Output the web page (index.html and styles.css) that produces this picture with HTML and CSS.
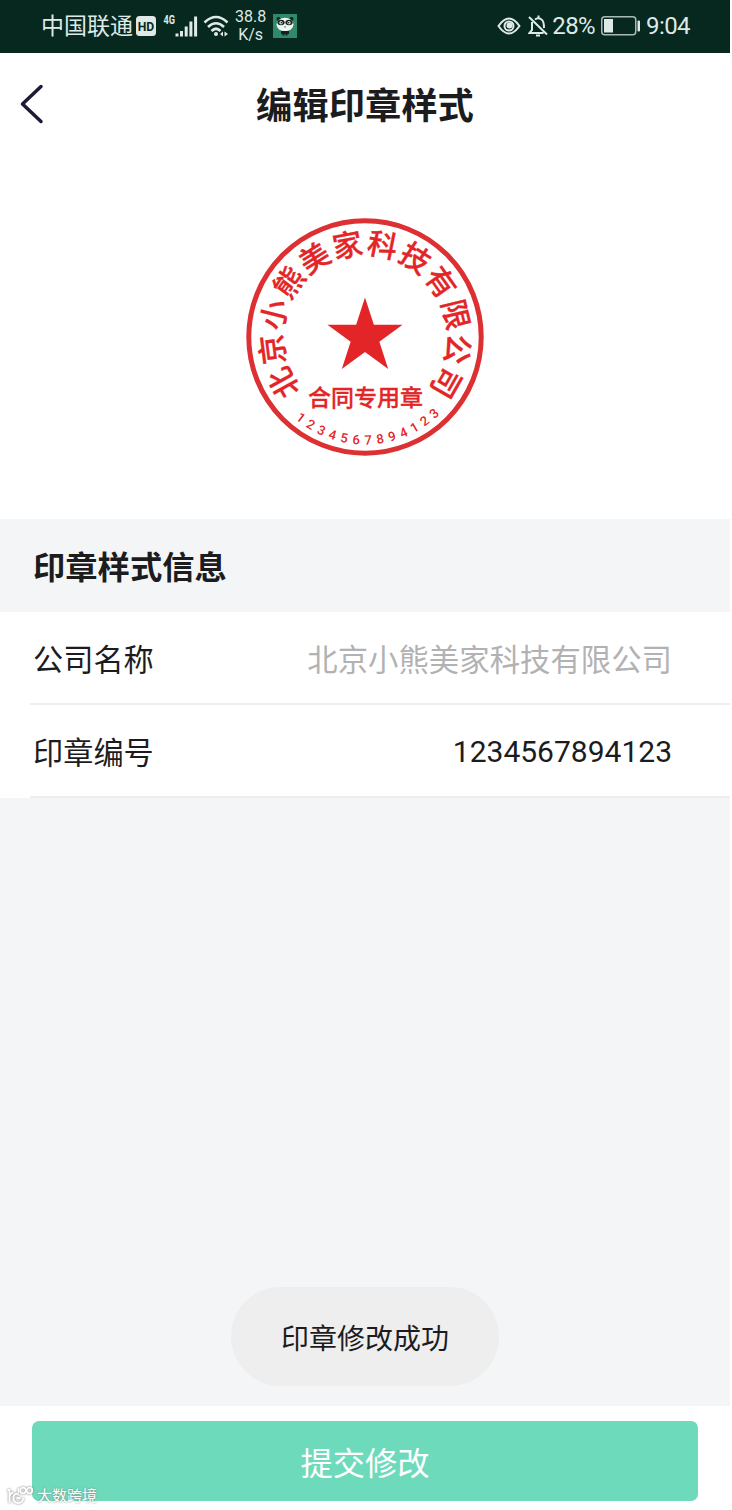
FILE: index.html
```
<!DOCTYPE html>
<html lang="zh-CN">
  <head>
    <meta charset="UTF-8" />
    <meta name="viewport" content="width=device-width, initial-scale=1.0" />
    <title>编辑印章样式</title>
    <link rel="stylesheet" href="styles.css">
  </head>
  <body>
    <div class="page">
      <header class="status-bar">
        <div class="status-left">
          <span class="carrier">中国联通</span>
          <svg class="icon-hd" viewBox="0 0 20 20">
            <rect width="20" height="20" rx="3.5" fill="#dfe9e5" />
            <text x="10" y="14.8" text-anchor="middle" textLength="16.5" lengthAdjust="spacingAndGlyphs">HD</text>
          </svg>
          <svg class="icon-signal" viewBox="0 0 36 24">
            <text x="0.5" y="10" textLength="11.5" lengthAdjust="spacingAndGlyphs">4G</text>
            <path d="M14 19.5v3M18.500 17v5.500M23.200 12.500v10M27.900 7.500v15M32.600 2.500v20" />
          </svg>
          <svg class="icon-wifi" viewBox="0 0 26 22">
            <path d="M1.500 7.500Q13 -3.500 24.500 7.500M5 12Q13 4.500 21 12M8.500 16Q13 11.500 17.500 16" />
            <circle cx="13" cy="19" r="2" />
            <path class="arrows" d="M20 16.500v5l-3-2.500zM21.500 16.500v5l3.500-2.500z" />
          </svg>
          <span class="speed">38.8<br />K/s</span>
          <svg class="icon-panda" viewBox="0 0 24 24">
            <rect width="24" height="24" fill="#2f8a6c" />
            <circle cx="5.500" cy="5" r="2" fill="#14201c" />
            <circle cx="18.500" cy="5" r="2" fill="#14201c" />
            <ellipse cx="12" cy="10.500" rx="8.500" ry="6.800" fill="#f1f5f2" />
            <ellipse cx="8" cy="8.500" rx="3.600" ry="2.700" fill="#14201c" />
            <ellipse cx="16" cy="8.500" rx="3.600" ry="2.700" fill="#14201c" />
            <circle cx="8" cy="8.700" r="1.700" fill="#dfe5e2" />
            <circle cx="16" cy="8.700" r="1.700" fill="#dfe5e2" />
            <circle cx="8.300" cy="8.700" r="0.800" fill="#14201c" />
            <circle cx="15.700" cy="8.700" r="0.800" fill="#14201c" />
            <path d="M11 12.500h2l-1 1.200z" fill="#14201c" />
            <path d="M8 17h8v3h-1.500v1.500h-2V20h-1v1.500h-2V20H8z" fill="#14201c" />
          </svg>
        </div>
        <div class="status-right">
          <svg class="icon-eye" viewBox="0 0 24 18">
            <path d="M1.500 9Q12 -6 22.500 9Q12 24 1.500 9z" />
            <circle cx="12" cy="9" r="4.500" />
            <circle cx="12.500" cy="8.500" r="3" class="pupil" />
          </svg>
          <svg class="icon-bell" viewBox="0 0 20 22">
            <path d="M1 2L19 19.500M4 7v8l-2.500 3h14M7 4.500Q10 2 13.500 4.500Q16 6 16 13M10.500 0.500v2.500" />
            <path d="M8 20.500h4" />
          </svg>
          <span class="percent">28%</span>
          <svg class="icon-battery" viewBox="0 0 40 20">
            <rect class="case" x="0.750" y="0.750" width="34" height="18" rx="3" />
            <rect x="3" y="3" width="9" height="13.500" />
            <rect x="36.500" y="4.500" width="2.500" height="11" rx="1" />
          </svg>
          <span class="time">9:04</span>
        </div>
      </header>

      <div class="title-bar">
        <svg class="back" viewBox="0 0 24 40">
          <path d="M21 2.500L2.500 20L21 37.500" />
        </svg>
        <h1 class="title">编辑印章样式</h1>
      </div>

      <div class="preview">
        <svg class="seal" viewBox="-120 -120 240 240">
          <defs>
            <path id="nameArc" d="M0 82.500A82.500 82.500 0 0 1 0 -82.500A82.500 82.500 0 0 1 0 82.500" />
            <path id="codeArc" d="M-107.500 0A107.500 107.500 0 0 0 107.500 0" />
          </defs>
          <circle r="116.200" />
          <path class="star" d="M0 -39.500L8.870 -12.210L37.570 -12.210L14.350 4.660L23.220 31.960L0 15.090L-23.220 31.960L-14.350 4.660L-37.570 -12.210L-8.870 -12.210Z" />
          <text class="seal-name"><textPath href="#nameArc" startOffset="50.100%">北京小熊美家科技有限公司</textPath></text>
          <text class="seal-type" x="0.500" y="69">合同专用章</text>
          <text class="seal-code"><textPath href="#codeArc" startOffset="51.800%">1234567894123</textPath></text>
        </svg>
      </div>

      <h2 class="section-title">印章样式信息</h2>
      <div class="form">
        <div class="row">
          <span class="label">公司名称</span>
          <span class="value disabled">北京小熊美家科技有限公司</span>
        </div>
        <div class="row">
          <span class="label">印章编号</span>
          <span class="value">1234567894123</span>
        </div>
      </div>

      <div class="space">
        <div class="toast">印章修改成功</div>
      </div>

      <footer class="footer">
        <button class="submit">提交修改</button>
        <div class="watermark">
          <svg class="watermark-logo" viewBox="0 0 28 20">
            <path d="M1.500 4h2v13M4 9.500q1-3 3.500-3M13 8.500q-5.500-2-5.500 3.500q0 5 5 5q4 0 5-5M10.500 12h4M12.500 2v5" />
            <circle cx="17" cy="4.500" r="2.800" />
            <circle cx="23.500" cy="4.500" r="2.800" />
          </svg>
          <span>大数跨境</span>
        </div>
      </footer>
    </div>
  </body>
</html>
```
FILE: styles.css
```
body {
  margin: 0;
  background-color: #fff;
  font-family: Roboto, "Noto Sans CJK SC", sans-serif;
  color: #1c1c1e;
}
.page {
  display: flex;
  flex-direction: column;
  width: 730px;
  height: 1510px;
  overflow: hidden;
}
.status-bar {
  display: flex;
  justify-content: space-between;
  align-items: center;
  box-sizing: border-box;
  height: 53px;
  padding: 0 40px 2px 41px;
  background-color: #06281f;
  color: #dfe9e5;
}
.status-left,
.status-right {
  display: flex;
  align-items: center;
}
.status-bar svg {
  flex: none;
  fill: #dfe9e5;
}
.carrier {
  padding-top: 3px;
  font-size: 23px;
  line-height: 30px;
}
.icon-hd {
  width: 20px;
  height: 20px;
  margin-left: 3px;
}
.icon-hd text {
  font-size: 13.5px;
  font-weight: bold;
  fill: #06281f;
}
.icon-signal {
  width: 36px;
  height: 24px;
  margin-left: 7px;
}
.icon-signal text {
  font-size: 13px;
  font-weight: bold;
}
.icon-signal path {
  stroke: #dfe9e5;
  stroke-width: 3;
}
.icon-wifi {
  width: 26px;
  height: 22px;
  margin-left: 4px;
}
.status-bar .icon-wifi path {
  fill: none;
  stroke: #dfe9e5;
  stroke-width: 2.6;
}
.status-bar .icon-wifi .arrows {
  fill: #dfe9e5;
  stroke: none;
}
.speed {
  padding-top: 1px;
  margin-left: 6px;
  font-size: 16px;
  line-height: 18px;
  text-align: center;
}
.icon-panda {
  width: 24px;
  height: 24px;
  margin-left: 7px;
}
.status-bar .icon-eye,
.status-bar .icon-bell {
  fill: none;
  stroke: #dfe9e5;
  stroke-width: 2;
}
.icon-eye {
  width: 24px;
  height: 18px;
}
.status-bar .icon-eye .pupil {
  fill: #dfe9e5;
  stroke: none;
}
.icon-bell {
  width: 20px;
  height: 22px;
  margin-left: 7px;
}
.percent,
.time {
  font-size: 24px;
  letter-spacing: -0.6px;
}
.percent {
  margin-left: 4px;
}
.icon-battery {
  width: 40px;
  height: 20px;
  margin: 0 5px 0 6px;
}
.status-bar .icon-battery .case {
  fill: none;
  stroke: #a9bab4;
  stroke-width: 1.5;
}
.title-bar {
  display: grid;
  grid-template-columns: 60px 1fr 60px;
  align-items: center;
  height: 102px;
}
.back {
  width: 24px;
  height: 40px;
  margin-left: 20px;
  fill: none;
  stroke: #1d1b33;
  stroke-width: 3.5;
  stroke-linecap: round;
  stroke-linejoin: round;
}
.title {
  margin: 0;
  padding-bottom: 2px;
  font-size: 36.3px;
  font-weight: bold;
  text-align: center;
}
.preview {
  display: flex;
  justify-content: center;
  align-items: center;
  height: 364px;
}
.seal {
  width: 240px;
  height: 240px;
  fill: #e32527;
}
.seal circle {
  fill: none;
  stroke: #dc3033;
  stroke-width: 5;
}
.seal text {
  text-anchor: middle;
  font-weight: 500;
}
.seal .seal-name {
  font-size: 30px;
  letter-spacing: 1.2px;
  stroke: #e32527;
  stroke-width: 0.3;
}
.seal .seal-type {
  font-size: 23px;
  stroke: #e32527;
  stroke-width: 0.3;
}
.seal-code {
  font-size: 13px;
  letter-spacing: 5.2px;
}
.section-title {
  box-sizing: border-box;
  height: 93px;
  margin: 0;
  padding: 3px 0 0 33px;
  background-color: #f4f5f7;
  font-size: 32.3px;
  font-weight: bold;
  line-height: 93px;
}
.form {
  background-color: #fff;
}
.row {
  display: flex;
  justify-content: space-between;
  box-sizing: border-box;
  height: 93px;
  margin-left: 30px;
  padding: 0 58px 0 3px;
  border-bottom: 2px solid #eeeeef;
  font-size: 30px;
  line-height: 93px;
}
.label {
  font-size: 30.2px;
  line-height: 97px;
}
.value.disabled {
  color: #b2b2b4;
  font-size: 30.4px;
  line-height: 97px;
}
.space {
  display: flex;
  flex: 1;
  justify-content: center;
  align-items: flex-end;
  padding-bottom: 20px;
  background-color: #f4f5f7;
}
.toast {
  box-sizing: border-box;
  width: 268px;
  height: 99px;
  padding-top: 3px;
  border-radius: 50px;
  background-color: #eee;
  font-size: 28px;
  line-height: 99px;
  text-align: center;
}
.footer {
  position: relative;
  box-sizing: border-box;
  height: 104px;
  padding: 15px 32px 9px 32px;
}
.submit {
  width: 100%;
  height: 80px;
  padding: 0;
  border: none;
  border-radius: 7px;
  background-color: #6ddabb;
  color: #fff;
  font-family: inherit;
  font-size: 32.3px;
}
/* 左下角水印 */
.watermark {
  position: absolute;
  left: 6px;
  bottom: 4px;
  display: flex;
  align-items: center;
  color: #fff;
  font-size: 15px;
  line-height: 20px;
  text-shadow: 0 0 2px #777;
}
.watermark-logo {
  width: 28px;
  height: 20px;
  margin-right: 3px;
  fill: none;
  stroke: #fff;
  stroke-width: 1.8;
  filter: drop-shadow(0 0 1px #777);
}
```
